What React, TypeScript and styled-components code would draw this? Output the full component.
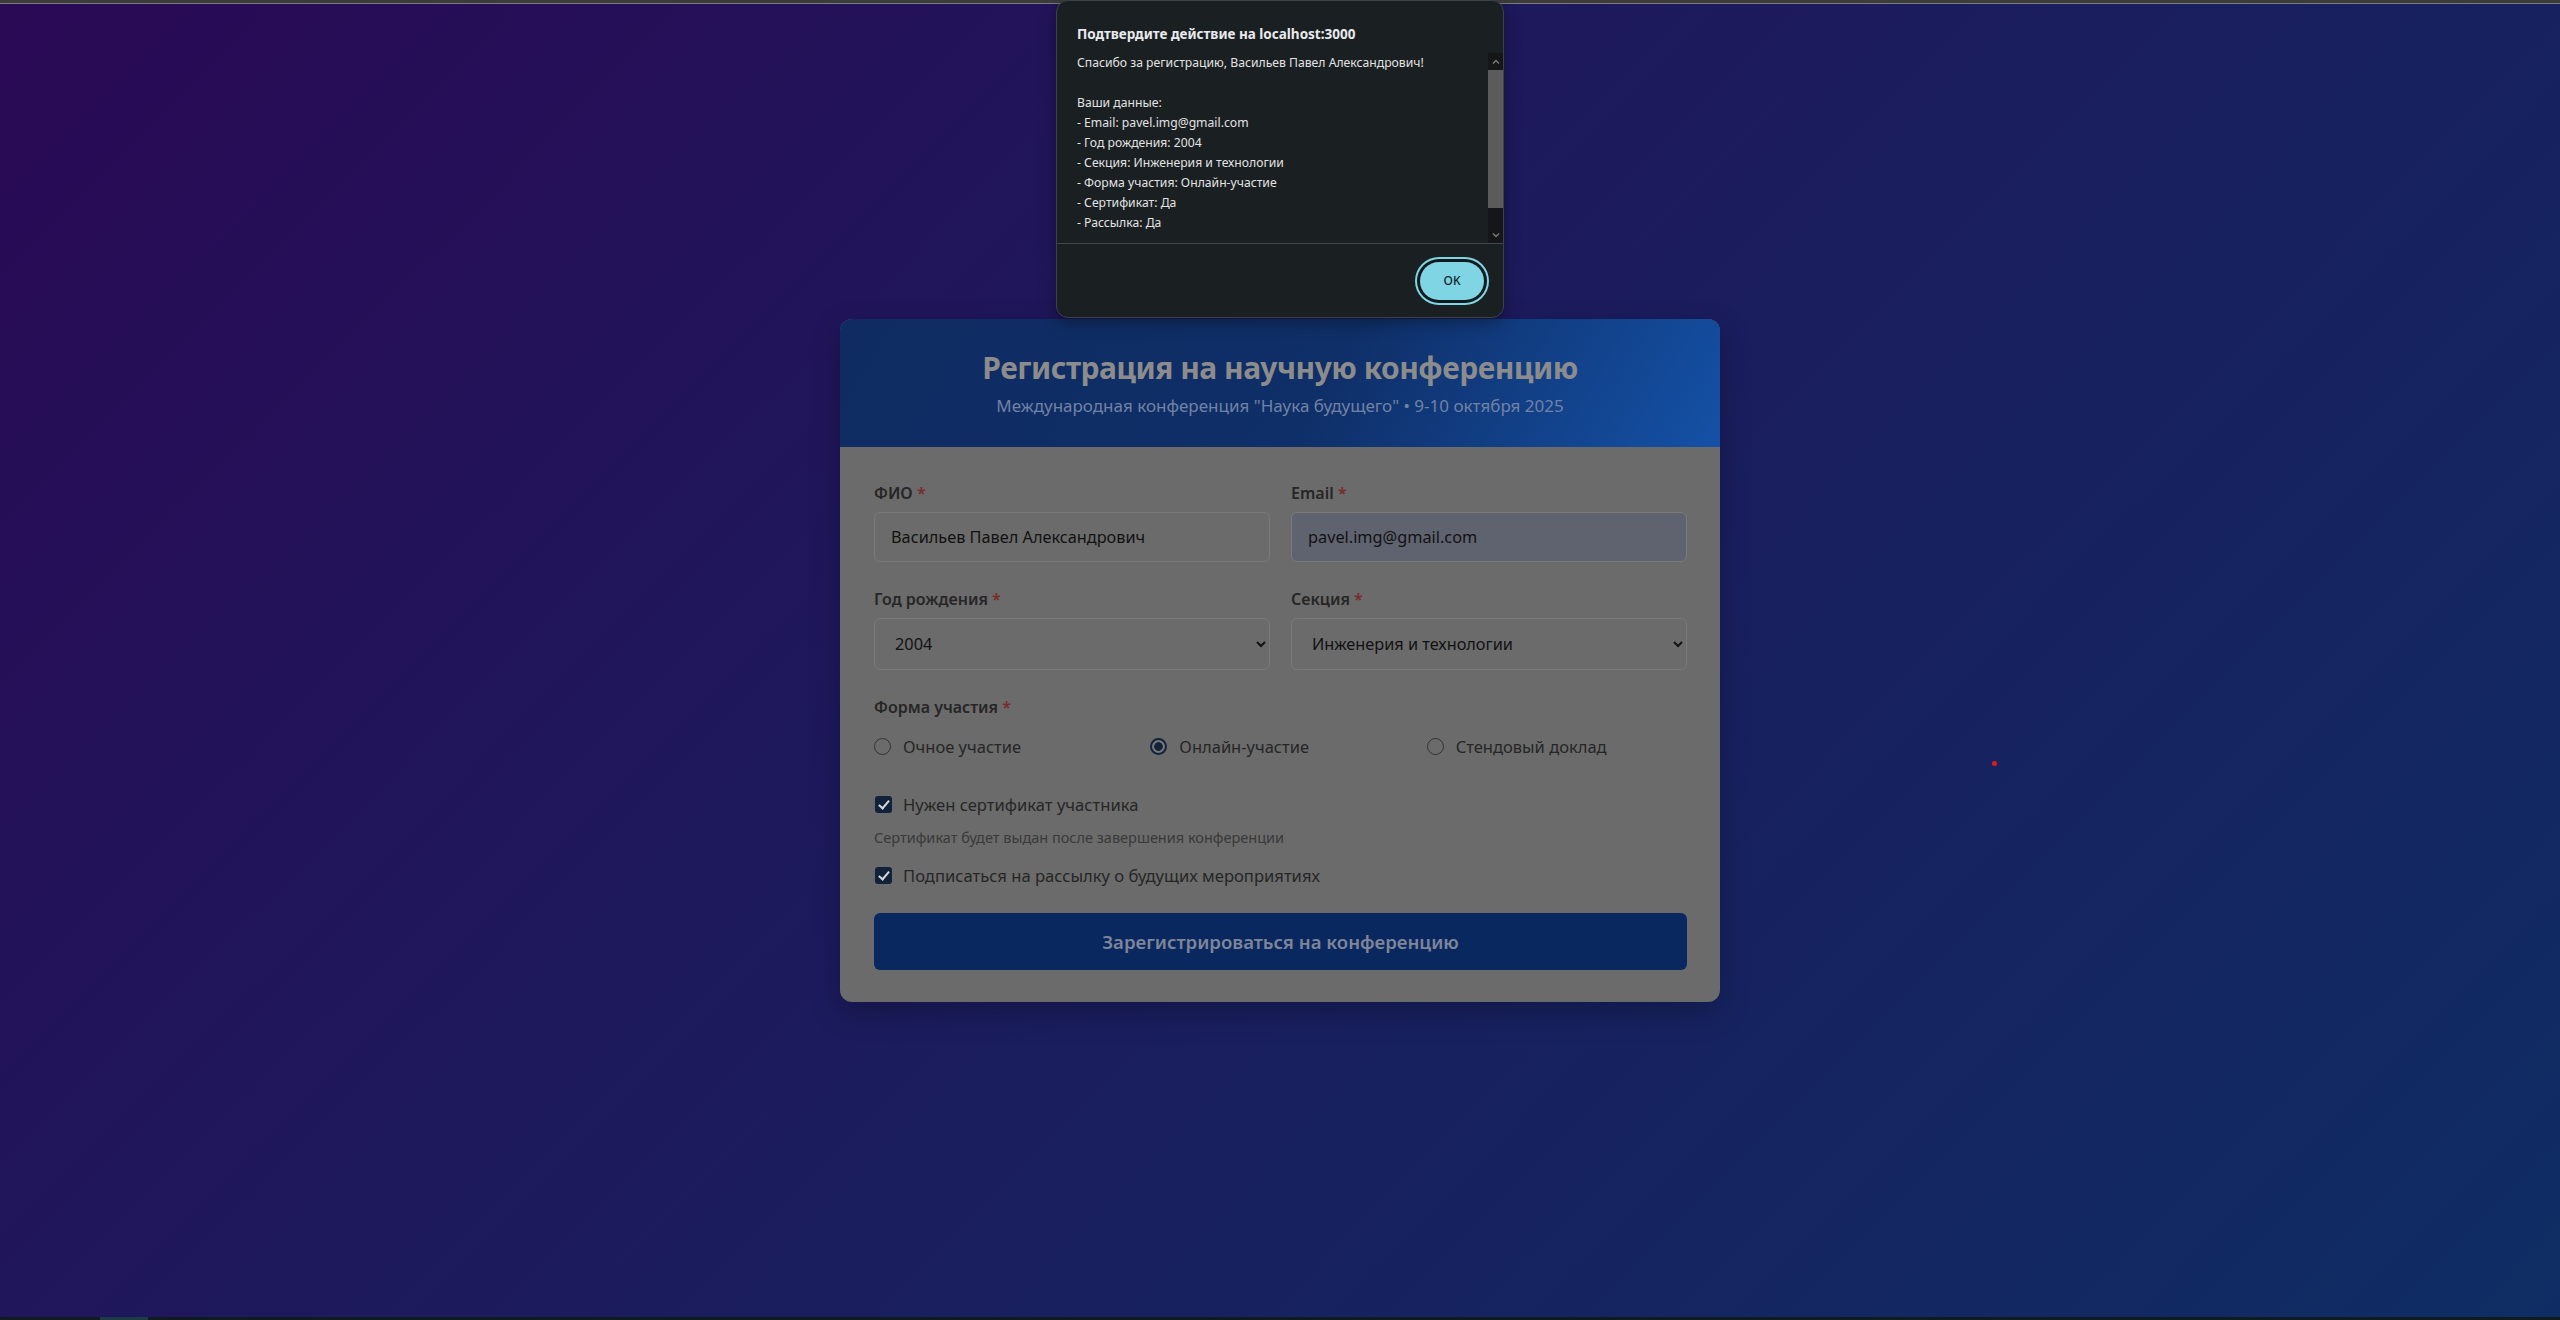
import React from "react";
import styled, { createGlobalStyle } from "styled-components";

const FONT = `"Noto Sans", "Open Sans", "DejaVu Sans", sans-serif`;

const Global = createGlobalStyle`
  html, body { margin: 0; padding: 0; }
  body { font-family: ${FONT}; background: #1c1a5e; }
  * { box-sizing: border-box; }
`;

const Page = styled.div`
  position: relative;
  height: 1320px;
  display: flex;
  flex-direction: column;
  overflow: hidden;
  background: linear-gradient(135deg, #2a0955 0%, #1b1c5e 50%, #0f2d64 100%);
`;

const TopStrip = styled.div`
  height: 4px;
  flex: none;
  background: #3c3c3c;
  border-bottom: 1px solid #7c7c7c;
`;

const BottomStrip = styled.div`
  height: 3px;
  flex: none;
  display: flex;
  background: #0e1c22;
`;

const StripSegment = styled.div`
  margin-left: 100px;
  width: 48px;
  background: #1d3b47;
`;

const Stage = styled.main`
  flex: 1;
  display: flex;
  align-items: center;
  justify-content: center;
`;

const Card = styled.section`
  width: 880px;
  border-radius: 12px;
  overflow: hidden;
  background: #6b6b6b;
  box-shadow: 0 10px 30px rgba(0, 0, 0, 0.25);
`;

const Header = styled.header`
  height: 128px;
  display: flex;
  flex-direction: column;
  align-items: center;
  justify-content: center;
  gap: 6px;
  background: linear-gradient(120deg, #0f2b62 0%, #0f2f68 55%, #1451a6 100%);
`;

const Title = styled.h1`
  margin: 0;
  font-size: 30px;
  letter-spacing: -0.5px;
  line-height: 40px;
  font-weight: 700;
  color: #8c8c8c;
`;

const Subtitle = styled.p`
  margin: 0;
  font-size: 17px;
  line-height: 24px;
  color: #7282a4;
`;

const Form = styled.form`
  padding: 35px 33px 32px 34px;
  display: flex;
  flex-direction: column;
`;

const Row = styled.div`
  display: grid;
  grid-template-columns: 1fr 1fr;
  gap: 21px;
  margin-bottom: 26px;
`;

const Field = styled.div`
  display: flex;
  flex-direction: column;
`;

const Label = styled.label`
  font-size: 16px;
  line-height: 22px;
  font-weight: 600;
  color: #262626;
  margin-bottom: 8px;
`;

const Star = styled.span`
  color: #7a2a2a;
`;

const TextInput = styled.input<{ $autofill?: boolean }>`
  height: 50px;
  padding: 0 16px;
  font-family: ${FONT};
  font-size: 16.3px;
  color: #121212;
  background: ${(p) => (p.$autofill ? "#5f636f" : "#6b6b6b")};
  border: 1px solid #7a7a7a;
  border-radius: 6px;
  outline: none;
`;

const Select = styled.select`
  height: 52px;
  padding: 0 8px 0 16px;
  font-family: ${FONT};
  font-size: 16.3px;
  color: #121212;
  background: #6b6b6b;
  border: 1px solid #7a7a7a;
  border-radius: 6px;
  outline: none;
`;

const Group = styled.div`
  display: flex;
  flex-direction: column;
  margin-bottom: 34px;
`;

const RadioGrid = styled.div`
  display: grid;
  grid-template-columns: repeat(3, 1fr);
  gap: 16px;
  margin-top: 8px;
`;

const Option = styled.label`
  display: flex;
  align-items: center;
  gap: 12px;
  height: 24px;
  font-size: 16.5px;
  color: #262626;
`;

const Radio = styled.input.attrs({ type: "radio" })`
  appearance: none;
  margin: 0;
  width: 17px;
  height: 17px;
  border-radius: 50%;
  border: 1px solid #333333;
  background: transparent;
  flex: none;
  &:checked {
    border: 2px solid #12223a;
    background: radial-gradient(circle, #12223a 0 4px, #777777 4.6px);
  }
`;

const Check = styled.input.attrs({ type: "checkbox" })`
  appearance: none;
  margin: 0 0 0 1px;
  width: 17px;
  height: 17px;
  border-radius: 3px;
  flex: none;
  background: #12223a;
  display: grid;
  place-items: center;
  &::after {
    content: "";
    width: 4px;
    height: 9px;
    margin-top: -2px;
    border: solid #d4d6da;
    border-width: 0 2.5px 2.5px 0;
    transform: rotate(40deg);
  }
`;

const CheckRow = styled.label`
  display: flex;
  align-items: center;
  gap: 11px;
  height: 24px;
  font-size: 16.6px;
  color: #262626;
`;

const Hint = styled.p`
  margin: 11px 0 16px;
  font-size: 14.5px;
  line-height: 20px;
  color: #393939;
`;

const Submit = styled.button`
  margin-top: 26px;
  height: 57px;
  border: none;
  border-radius: 6px;
  background: #0a2860;
  color: #7e8598;
  font-family: ${FONT};
  font-size: 18.6px;
  font-weight: 600;
`;

/* ---------- confirm dialog (lies over the page) ---------- */

const Dialog = styled.div`
  position: absolute;
  top: 0;
  left: 1056px;
  width: 448px;
  height: 318px;
  display: flex;
  flex-direction: column;
  background: #1a1f22;
  border: 1px solid #3a4246;
  border-radius: 12px;
  box-shadow: 0 4px 16px rgba(0, 0, 0, 0.35);
  font-family: ${FONT};
`;

const DialogTitle = styled.div`
  padding: 23px 20px 9px;
  font-size: 13.5px;
  line-height: 20px;
  font-weight: 700;
  color: #e8eaed;
`;

const MessageArea = styled.div`
  height: 190px;
  display: flex;
`;

const MessageText = styled.div`
  flex: 1;
  overflow: hidden;
  padding-left: 20px;
  white-space: pre-line;
  font-size: 12.2px;
  line-height: 20px;
  color: #e3e3e3;
`;

const Scrollbar = styled.div`
  width: 15px;
  display: flex;
  flex-direction: column;
  align-items: center;
  background: #141617;
`;

const Arrow = styled.div`
  height: 16px;
  display: flex;
  align-items: center;
  justify-content: center;
  color: #7a7a7a;
`;

const Track = styled.div`
  flex: 1;
  width: 100%;
  display: flex;
  flex-direction: column;
`;

const Thumb = styled.div`
  margin-top: 1px;
  height: 138px;
  width: 100%;
  background: #5b5b5b;
`;

const DialogFooter = styled.div`
  flex: 1;
  display: flex;
  align-items: center;
  justify-content: flex-end;
  padding-right: 19px;
  border-top: 1px solid #3c4a4e;
`;

const OkButton = styled.button`
  width: 64px;
  height: 38px;
  border: none;
  border-radius: 19px;
  background: #7fd5e3;
  color: #10252b;
  font-family: ${FONT};
  font-size: 12px;
  font-weight: 500;
  box-shadow: 0 0 0 3px #101a1e, 0 0 0 5px #7fd5e3;
`;

const Cursor = styled.div`
  position: absolute;
  left: 1992px;
  top: 761px;
  width: 5px;
  height: 5px;
  border-radius: 50%;
  background: #e31b1b;
`;

const Chevron = ({ up }: { up?: boolean }) => (
  <svg width="8" height="5" viewBox="0 0 8 5">
    <path
      d={up ? "M1 4.5 L4 1.5 L7 4.5" : "M1 0.5 L4 3.5 L7 0.5"}
      fill="none"
      stroke="currentColor"
      strokeWidth="1.4"
    />
  </svg>
);

const message = `Спасибо за регистрацию, Васильев Павел Александрович!

Ваши данные:
- Email: pavel.img@gmail.com
- Год рождения: 2004
- Секция: Инженерия и технологии
- Форма участия: Онлайн-участие
- Сертификат: Да
- Рассылка: Да`;

export default function App() {
  return (
    <>
      <Global />
      <Page>
        <TopStrip />
        <Stage>
          <Card>
            <Header>
              <Title>Регистрация на научную конференцию</Title>
              <Subtitle>
                Международная конференция "Наука будущего" • 9-10 октября 2025
              </Subtitle>
            </Header>
            <Form onSubmit={(e) => e.preventDefault()}>
              <Row>
                <Field>
                  <Label>
                    ФИО <Star>*</Star>
                  </Label>
                  <TextInput defaultValue="Васильев Павел Александрович" />
                </Field>
                <Field>
                  <Label>
                    Email <Star>*</Star>
                  </Label>
                  <TextInput $autofill defaultValue="pavel.img@gmail.com" />
                </Field>
              </Row>
              <Row>
                <Field>
                  <Label>
                    Год рождения <Star>*</Star>
                  </Label>
                  <Select defaultValue="2004">
                    <option value="2004">2004</option>
                  </Select>
                </Field>
                <Field>
                  <Label>
                    Секция <Star>*</Star>
                  </Label>
                  <Select defaultValue="eng">
                    <option value="eng">Инженерия и технологии</option>
                  </Select>
                </Field>
              </Row>
              <Group>
                <Label>
                  Форма участия <Star>*</Star>
                </Label>
                <RadioGrid>
                  <Option>
                    <Radio name="form" />
                    Очное участие
                  </Option>
                  <Option>
                    <Radio name="form" defaultChecked />
                    Онлайн-участие
                  </Option>
                  <Option>
                    <Radio name="form" />
                    Стендовый доклад
                  </Option>
                </RadioGrid>
              </Group>
              <CheckRow>
                <Check defaultChecked />
                Нужен сертификат участника
              </CheckRow>
              <Hint>Сертификат будет выдан после завершения конференции</Hint>
              <CheckRow>
                <Check defaultChecked />
                Подписаться на рассылку о будущих мероприятиях
              </CheckRow>
              <Submit type="submit">Зарегистрироваться на конференцию</Submit>
            </Form>
          </Card>
        </Stage>
        <BottomStrip>
          <StripSegment />
        </BottomStrip>

        <Dialog role="dialog">
          <DialogTitle>Подтвердите действие на localhost:3000</DialogTitle>
          <MessageArea>
            <MessageText>{message}</MessageText>
            <Scrollbar>
              <Arrow>
                <Chevron up />
              </Arrow>
              <Track>
                <Thumb />
              </Track>
              <Arrow>
                <Chevron />
              </Arrow>
            </Scrollbar>
          </MessageArea>
          <DialogFooter>
            <OkButton>OK</OkButton>
          </DialogFooter>
        </Dialog>
        <Cursor />
      </Page>
    </>
  );
}
